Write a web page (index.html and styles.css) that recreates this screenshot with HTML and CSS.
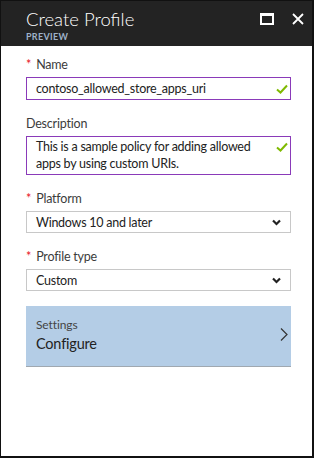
FILE: index.html
```html
<!DOCTYPE html>
<html lang="en">
<head>
    <meta charset="UTF-8">
    <meta name="viewport" content="width=device-width, initial-scale=1.0">
    <title>Create Profile</title>
    <link rel="stylesheet" href="styles.css">
</head>
<body>
    <div class="blade">
        <div class="blade-header">
            <div>
                <h1 class="blade-title">Create Profile</h1>
                <div class="blade-subtitle">PREVIEW</div>
            </div>
            <div class="blade-controls">
                <svg width="14" height="12" viewBox="0 0 14 12">
                    <rect x="0" y="0" width="14" height="12" fill="#fff"/>
                    <rect x="2" y="3" width="10" height="7" fill="#232323"/>
                </svg>
                <svg width="12" height="12" viewBox="0 0 12 12">
                    <path d="M1 1 L11 11 M11 1 L1 11" stroke="#fff" stroke-width="1.8"/>
                </svg>
            </div>
        </div>

        <div class="blade-content">
            <div class="field">
                <label class="field-label"><span class="required">*</span>Name</label>
                <div class="input valid">
                    <span>contoso_allowed_store_apps_uri</span>
                    <svg class="check" width="12" height="10" viewBox="0 0 12 10"><path d="M1 5.5 L4.5 8.5 L11 1.5" fill="none" stroke="#7fba00" stroke-width="2"/></svg>
                </div>
            </div>

            <div class="field">
                <label class="field-label">Description</label>
                <div class="input textarea valid">
                    <span>This is a sample policy for adding allowed apps by using custom URIs.</span>
                    <svg class="check" width="12" height="10" viewBox="0 0 12 10"><path d="M1 5.5 L4.5 8.5 L11 1.5" fill="none" stroke="#7fba00" stroke-width="2"/></svg>
                </div>
            </div>

            <div class="field">
                <label class="field-label"><span class="required">*</span>Platform</label>
                <div class="input select">
                    <span>Windows 10 and later</span>
                    <svg class="chevron" width="9" height="7" viewBox="0 0 9 7"><path d="M1 1.5 L4.5 5 L8 1.5" fill="none" stroke="#222" stroke-width="2.2"/></svg>
                </div>
            </div>

            <div class="field">
                <label class="field-label"><span class="required">*</span>Profile type</label>
                <div class="input select">
                    <span>Custom</span>
                    <svg class="chevron" width="9" height="7" viewBox="0 0 9 7"><path d="M1 1.5 L4.5 5 L8 1.5" fill="none" stroke="#222" stroke-width="2.2"/></svg>
                </div>
            </div>

            <div class="settings">
                <div>
                    <div class="settings-label">Settings</div>
                    <div class="settings-value">Configure</div>
                </div>
                <svg class="settings-arrow" width="8" height="13" viewBox="0 0 8 13"><path d="M1 0.5 L7 6.5 L1 12.5" fill="none" stroke="#333" stroke-width="1.2"/></svg>
            </div>
        </div>
    </div>
</body>
</html>
```

FILE: styles.css
```css
body {
    margin: 0;
    font-family: Lato, 'Open Sans', sans-serif;
    color: #333;
    background: #fff;
}

.blade {
    box-sizing: border-box;
    width: 314px;
    height: 458px;
    border: 1px solid #111;
    border-right-width: 2px;
    border-bottom-width: 2px;
    background: #fff;
}

.blade-header {
    display: flex;
    justify-content: space-between;
    background-color: #232323;
    height: 45px;
    padding: 0 8px 0 25px;
}

.blade-title {
    margin: 0;
    padding-top: 7px;
    font-size: 18.5px;
    font-weight: 300;
    line-height: 22px;
    color: #fff;
}

.blade-subtitle {
    margin-top: 1px;
    font-size: 9px;
    font-weight: 700;
    color: #9fb2c8;
    letter-spacing: 0.3px;
}

.blade-controls {
    display: flex;
    gap: 18px;
    padding-top: 12px;
}

.blade-content {
    padding: 10px 21px 0 25px;
}

.field {
    margin-bottom: 15px;
}

.field-label {
    display: block;
    font-size: 12.5px;
    letter-spacing: -0.2px;
    line-height: 18px;
    margin-bottom: 3px;
    color: #3c3c3c;
}

.required {
    color: #e81123;
    margin-right: 5px;
}

.input {
    box-sizing: border-box;
    display: flex;
    align-items: center;
    justify-content: space-between;
    height: 22px;
    padding: 0 1px 0 9px;
    border: 1px solid #c8c8c8;
    font-size: 12.5px;
    letter-spacing: -0.25px;
    color: #222;
}

.input.valid {
    border-color: #8a3ab9;
    height: 23px;
}

.input.textarea {
    align-items: flex-start;
    height: 39px;
    padding-top: 1px;
    line-height: 17px;
}

.textarea span {
    width: 235px;
}

.check {
    margin-right: 1px;
}

.textarea .check {
    margin-top: 4px;
}

.select .chevron {
    margin-right: 8px;
}

.settings {
    display: flex;
    justify-content: space-between;
    box-sizing: border-box;
    height: 61px;
    margin-top: 1px;
    padding: 11px 3px 0 10px;
    background-color: #b4cde6;
    border-bottom: 1px solid #a0a8b0;
}

.settings-label {
    font-size: 12px;
    letter-spacing: -0.1px;
    color: #444;
    line-height: 16px;
}

.settings-value {
    font-size: 14.5px;
    letter-spacing: -0.2px;
    color: #222;
    line-height: 22px;
}

.settings-arrow {
    margin-top: 11px;
}
```
